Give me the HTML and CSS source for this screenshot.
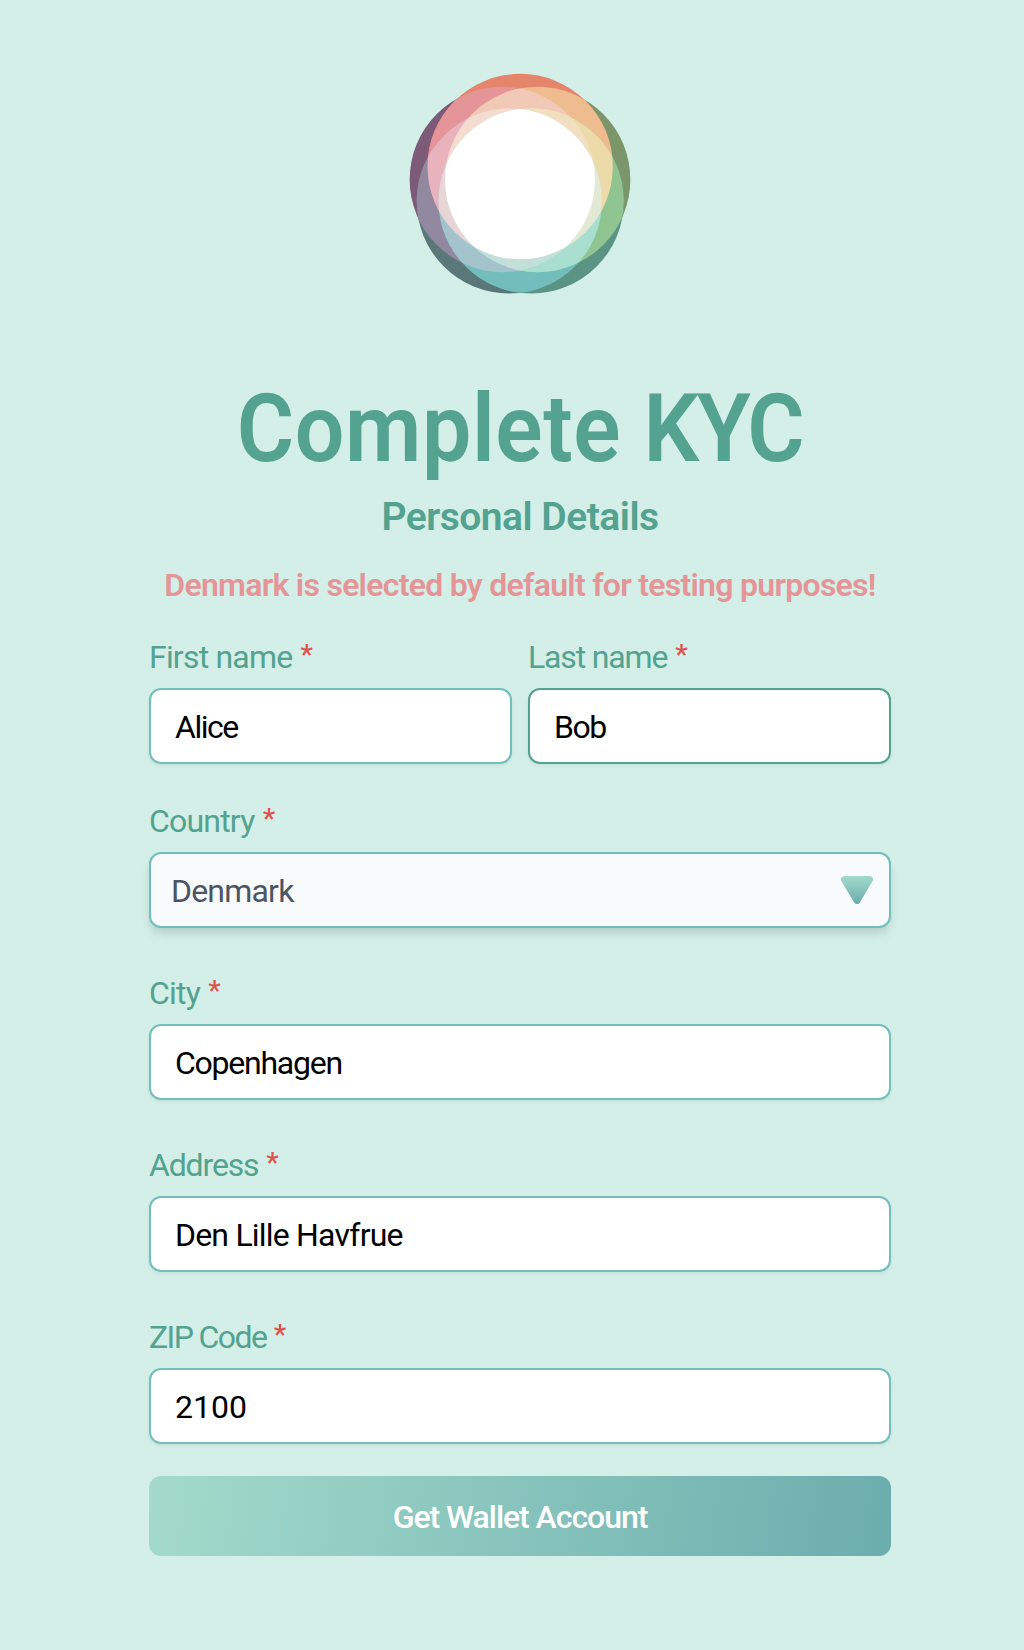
FILE: index.html
```html
<!DOCTYPE html>
<html lang="en">
<head>
<meta charset="utf-8">
<title>Complete KYC</title>
<link rel="stylesheet" href="styles.css">
</head>
<body>
<main class="page">
  <svg class="logo" viewBox="0 0 720 720" aria-hidden="true">
    <defs>
      <circle id="t" cx="360.5" cy="319.5" r="278"/>
      <circle id="l" cx="307" cy="358.5" r="278"/>
      <circle id="r" cx="413" cy="358.5" r="278"/>
      <circle id="bl" cx="328" cy="422.8" r="278"/>
      <circle id="br" cx="393.5" cy="422.8" r="278"/>
      <clipPath id="ct"><use href="#t"/></clipPath>
      <clipPath id="cl"><use href="#l"/></clipPath>
      <clipPath id="cr"><use href="#r"/></clipPath>
      <clipPath id="cbl"><use href="#bl"/></clipPath>
      <clipPath id="cbr"><use href="#br"/></clipPath>
    </defs>
    <use href="#l" fill="#7d5a78"/>
    <use href="#r" fill="#7c966b"/>
    <use href="#bl" fill="#5a777a"/>
    <use href="#br" fill="#5b9384"/>
    <use href="#t" fill="#e5856b"/>
    <g clip-path="url(#ct)"><use href="#l" fill="#e59598"/><use href="#r" fill="#eebc8e"/></g>
    <g clip-path="url(#cbl)"><use href="#l" fill="#9289a1"/><use href="#br" fill="#73bebd"/></g>
    <g clip-path="url(#cbr)"><use href="#r" fill="#90c591"/></g>
    <g clip-path="url(#ct)">
      <g clip-path="url(#cl)"><use href="#r" fill="#f2c9b6"/><use href="#bl" fill="#e8b3bd"/></g>
      <g clip-path="url(#cr)"><use href="#br" fill="#ecdba8"/></g>
    </g>
    <g clip-path="url(#cbl)"><g clip-path="url(#cbr)"><use href="#l" fill="#a3c3cd"/><use href="#r" fill="#a8dfcf"/></g></g>
    <g clip-path="url(#cl)"><g clip-path="url(#cr)">
      <g clip-path="url(#ct)"><use href="#bl" fill="#f5dcd0"/><use href="#br" fill="#f2dfc1"/></g>
      <g clip-path="url(#cbl)"><use href="#br" fill="#c3dfd9"/></g>
    </g></g>
    <g clip-path="url(#ct)"><g clip-path="url(#cbl)"><g clip-path="url(#cbr)">
      <use href="#l" fill="#e8d5d5"/><use href="#r" fill="#e4e9d5"/>
      <g clip-path="url(#cl)"><use href="#r" fill="#fff"/></g>
    </g></g></g>
  </svg>
  <h1 class="title">Complete <span class="acronym">KYC</span></h1>
  <h2 class="subtitle">Personal Details</h2>
  <p class="notice">Denmark is selected by default for testing purposes!</p>
  <form class="form">
    <div class="names">
      <div class="field"><label class="label" for="first">First name <span class="req">*</span></label><input class="input short" id="first" value="Alice"></div>
      <div class="field"><label class="label tight" for="last">Last name <span class="req">*</span></label><input class="input short active" id="last" value="Bob"></div>
    </div>
    <div class="field country">
      <div class="label">Country <span class="req">*</span></div>
      <div class="select"><span>Denmark</span>
        <svg class="arrow" viewBox="0 0 32 28" aria-hidden="true">
          <defs><linearGradient id="g" x1="0" y1="0" x2="0" y2="28" gradientUnits="userSpaceOnUse"><stop stop-color="#a3dacb"/><stop offset="1" stop-color="#6aacac"/></linearGradient></defs>
          <path d="M3.5 3.5H28.5L16 24.5Z" fill="url(#g)" stroke="url(#g)" stroke-width="7" stroke-linejoin="round"/>
        </svg>
      </div>
    </div>
    <div class="field"><label class="label" for="city">City <span class="req">*</span></label><input class="input city" id="city" value="Copenhagen"></div>
    <div class="field"><label class="label tight" for="address">Address <span class="req">*</span></label><input class="input" id="address" value="Den Lille Havfrue"></div>
    <div class="field"><label class="label tightest" for="zip">ZIP Code <span class="req">*</span></label><input class="input zip" id="zip" value="2100"></div>
    <button class="submit" type="button">Get Wallet Account</button>
  </form>
</main>
</body>
</html>
```
FILE: styles.css
```css
* { box-sizing: border-box; }
body { margin: 0; background: #d3efe7; color: #54a290; font-family: Roboto, "Open Sans", sans-serif; }
.page { width: 742px; height: 1650px; margin-left: 149px; padding-top: 60px; display: flex; flex-direction: column; align-items: center; }
.logo { width: 240px; height: 240px; flex: none; }
.title { margin: 79px 0 0; font-size: 94px; line-height: 100px; font-weight: 600; letter-spacing: .6px; white-space: nowrap; transform: scaleX(.935); }
.acronym { letter-spacing: -2.5px; }
.subtitle { margin: 15px 0 0; font-size: 39px; line-height: 46px; font-weight: 600; letter-spacing: -.5px; white-space: nowrap; }
.notice { margin: 25px 0 0; font-size: 32px; line-height: 40px; font-weight: 600; letter-spacing: -.72px; color: #e59598; white-space: nowrap; }
.form { width: 100%; margin-top: 32px; display: flex; flex-direction: column; gap: 45px; }
.names { display: grid; grid-template-columns: 1fr 1fr; gap: 16px; }
.field { display: flex; flex-direction: column; gap: 11px; }
.country { margin-top: -8px; }
.label { font-size: 32px; line-height: 40px; letter-spacing: -.8px; white-space: nowrap; }
.tight { letter-spacing: -1.15px; }
.tightest { letter-spacing: -1.6px; }
.req { margin-left: 1px; font-size: 28px; font-weight: 500; line-height: 0; vertical-align: 4px; color: #e0524d; }
.input, .select { width: 100%; height: 76px; border: 2px solid #70bebd; border-radius: 12px; font-family: inherit; font-size: 32px; letter-spacing: -.8px; }
.input { padding: 2px 24px 0; background: #fff; color: #000; box-shadow: 0 2px 4px rgba(0, 0, 0, .05); outline: none; }
.short { letter-spacing: -1.5px; }
.city { letter-spacing: -1.25px; }
.zip { letter-spacing: 0; }
.active { border-color: #54a290; }
.select { padding: 0 16px 0 20px; display: flex; align-items: center; justify-content: space-between; background: #f9fafc; color: #4b5563; box-shadow: 0 8px 12px -2px rgba(0, 0, 0, .1), 0 4px 8px -2px rgba(0, 0, 0, .06); }
.select span { padding-top: 2px; }
.arrow { width: 32px; height: 28px; }
.submit { height: 80px; margin-top: -13px; padding: 2px 0 0; border: 0; border-radius: 12px; background: linear-gradient(98deg, #a3dacb, #6badad); color: #fff; font-family: inherit; font-size: 32px; font-weight: 500; letter-spacing: -1.05px; }
```
